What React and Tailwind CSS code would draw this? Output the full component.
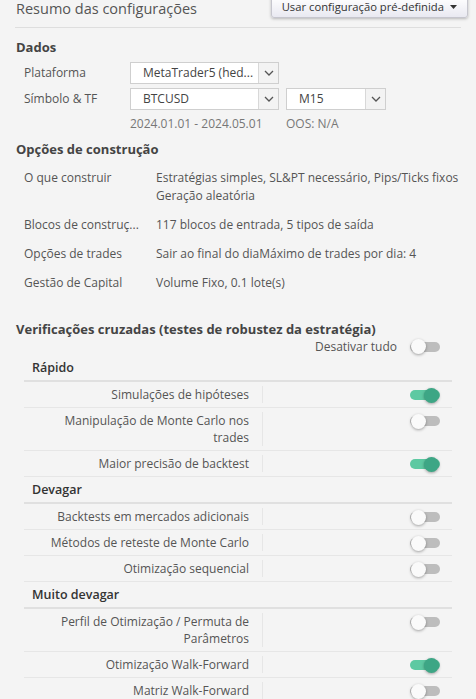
import React from 'react';

const font = { fontFamily: '"Open Sans", "Liberation Sans", sans-serif' };

const Chevron = () => (
  <svg width="10" height="6" viewBox="0 0 10 6" fill="none">
    <path d="M1 1l4 4 4-4" stroke="#555" strokeWidth="1.3" />
  </svg>
);

const Select = ({ value, className }) => (
  <div className={`flex h-[22px] border border-[#cfcfcf] bg-white ${className}`}>
    <div className="flex-1 whitespace-nowrap pl-[12px] text-[12px] leading-[20px] text-[#444]">{value}</div>
    <div className="flex w-[20px] items-center justify-center border-l border-[#d8d8d8] bg-[#f3f3f3]">
      <Chevron />
    </div>
  </div>
);

const Toggle = ({ on }) => (
  <div className="relative h-[10px] w-[30px] rounded-full">
    <div className={`h-[10px] w-[30px] rounded-full ${on ? 'bg-[#5dc9a2]' : 'bg-[#bdbdbd]'}`} />
    <div
      className={`absolute top-[-2.5px] h-[15px] w-[15px] rounded-full shadow-[0_1px_3px_rgba(0,0,0,0.35)] ${
        on ? 'right-[1px] bg-[#3da685]' : 'left-[1px] bg-[#fafafa]'
      }`}
    />
  </div>
);

const buildRows = [
  { label: 'O que construir', value: ['Estratégias simples, SL&PT necessário, Pips/Ticks fixos', 'Geração aleatória'] },
  { label: 'Blocos de construç...', value: ['117 blocos de entrada, 5 tipos de saída'] },
  { label: 'Opções de trades', value: ['Sair ao final do diaMáximo de trades por dia: 4'] },
  { label: 'Gestão de Capital', value: ['Volume Fixo, 0.1 lote(s)'] },
];

const groups = [
  {
    title: 'Rápido',
    items: [
      { label: ['Simulações de hipóteses'], on: true },
      { label: ['Manipulação de Monte Carlo nos', 'trades'], on: false },
      { label: ['Maior precisão de backtest'], on: true },
    ],
  },
  {
    title: 'Devagar',
    items: [
      { label: ['Backtests em mercados adicionais'], on: false },
      { label: ['Métodos de reteste de Monte Carlo'], on: false },
      { label: ['Otimização sequencial'], on: false },
    ],
  },
  {
    title: 'Muito devagar',
    items: [
      { label: ['Perfil de Otimização / Permuta de', 'Parâmetros'], on: false },
      { label: ['Otimização Walk-Forward'], on: true },
      { label: ['Matriz Walk-Forward'], on: false },
    ],
  },
];

export default function App() {
  return (
    <div className="h-[699px] w-[476px] overflow-hidden bg-[#f4f4f4] text-[#555]" style={font}>
      {/* header */}
      <div className="mx-[15px] flex h-[28px] items-start justify-between border-b border-[#dedede]">
        <h1 className="whitespace-nowrap pl-[1px] text-[14.5px] leading-[17px] text-[#555]">
          Resumo das configurações
        </h1>
        <button className="mr-[-7px] mt-[-4px] flex h-[22px] items-center gap-[6px] whitespace-nowrap rounded-b-[3px] border border-[#c6c6ce] bg-gradient-to-b from-[#ffffff] to-[#e9e9f1] pl-[10px] pr-[10px] text-[11.25px] text-[#333] shadow-[0_1px_3px_rgba(0,0,0,0.25)]">
          Usar configuração pré-definida
          <svg width="7" height="4" viewBox="0 0 7 4">
            <path d="M0 0h7L3.5 4z" fill="#333" />
          </svg>
        </button>
      </div>

      {/* Dados */}
      <div className="px-[16px] pt-[10px]">
        <h2 className="text-[13px] font-bold leading-[18px] text-[#444]">Dados</h2>
        <div className="mt-[6px] flex flex-col gap-[4px] pl-[8px]">
          <div className="flex items-center">
            <div className="w-[106px] text-[12px] text-[#555]">Plataforma</div>
            <Select value="MetaTrader5 (hed..." className="w-[149px]" />
          </div>
          <div className="flex items-center">
            <div className="w-[106px] text-[12px] text-[#555]">Símbolo &amp; TF</div>
            <Select value="BTCUSD" className="w-[149px]" />
            <Select value="M15" className="ml-[7px] w-[100px]" />
          </div>
          <div className="flex pl-[106px] text-[12px] leading-[20px] text-[#777]">
            <div className="w-[156px]">2024.01.01 - 2024.05.01</div>
            <div>OOS: N/A</div>
          </div>
        </div>
      </div>

      {/* Opções de construção */}
      <div className="px-[16px] pt-[6px]">
        <h2 className="text-[13px] font-bold leading-[18px] text-[#444]">Opções de construção</h2>
        <div className="mt-[11px] flex flex-col gap-[11px] pl-[8px]">
          {buildRows.map((r) => (
            <div key={r.label} className="flex text-[12px] leading-[18px] text-[#555]">
              <div className="w-[132px] shrink-0">{r.label}</div>
              <div>
                {r.value.map((v) => (
                  <div key={v}>{v}</div>
                ))}
              </div>
            </div>
          ))}
        </div>
      </div>

      {/* Verificações cruzadas */}
      <div className="px-[16px] pt-[28px]">
        <h2 className="text-[13px] font-bold leading-[18px] text-[#444]">
          Verificações cruzadas (testes de robustez da estratégia)
        </h2>
        <div className="ml-[8px] mr-[8px]">
          <div className="flex items-center justify-end gap-[13px] pr-[12px] text-[12px] leading-[17px]">
            <span>Desativar tudo</span>
            <Toggle on={false} />
          </div>
          {groups.map((g) => (
            <div key={g.title}>
              <div className="border-b-2 border-[#e0e0e0] pb-[4px] pl-[8px] pt-[4px] text-[12.5px] font-semibold leading-[17px] text-[#333]">
                {g.title}
              </div>
              {g.items.map((it) => (
                <div key={it.label[0]} className="flex border-b border-[#e6e6e6] py-[4px] text-[12px] leading-[17px]">
                  <div className="w-[239px] shrink-0 border-r border-[#e6e6e6] pr-[13px] text-right text-[#555]">
                    {it.label.map((l) => (
                      <div key={l}>{l}</div>
                    ))}
                  </div>
                  <div className="flex flex-1 justify-end pr-[12px] pt-[4px]">
                    <Toggle on={it.on} />
                  </div>
                </div>
              ))}
            </div>
          ))}
        </div>
      </div>
    </div>
  );
}
